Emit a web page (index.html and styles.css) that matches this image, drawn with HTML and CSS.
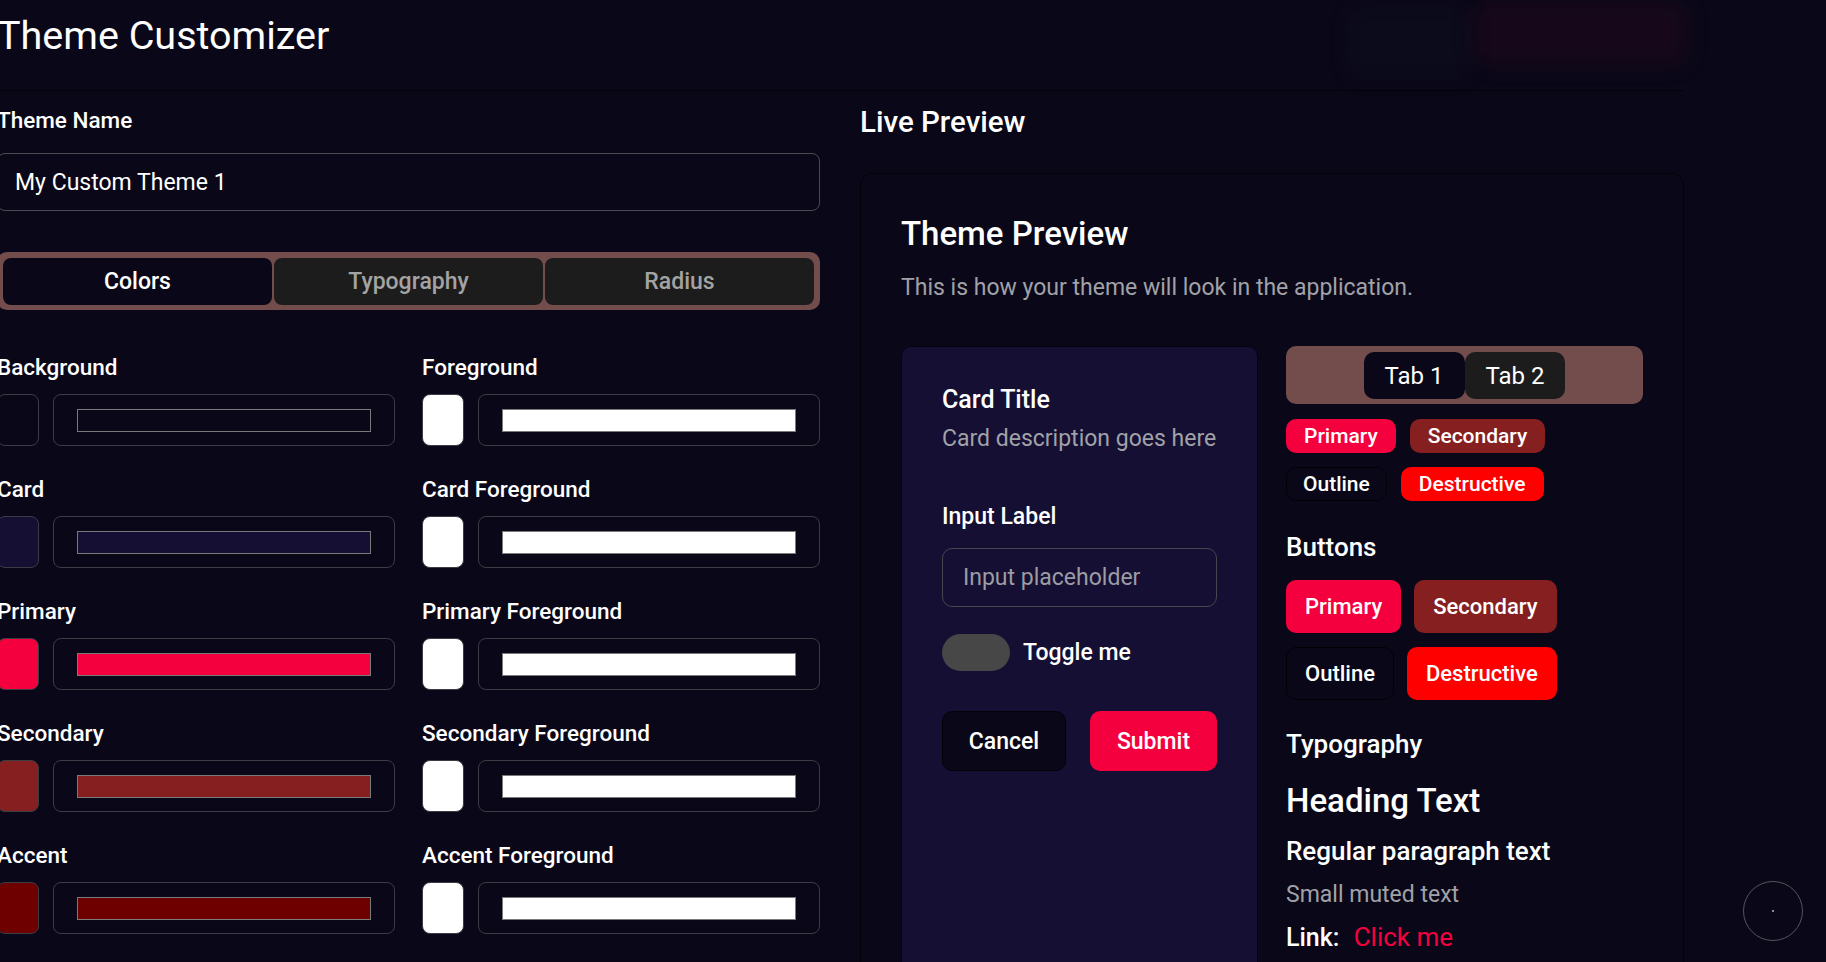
FILE: index.html
```html
<!DOCTYPE html>
<html lang="en">
<head>
<meta charset="utf-8">
<title>Theme Customizer</title>
<link rel="stylesheet" href="styles.css">
</head>
<body>
<div class="page">
  <header class="topbar">
    <h1 class="title">Theme Customizer</h1>
    <div class="top-actions">
      <div class="ghost ghost-dark"></div>
      <div class="ghost ghost-red"></div>
    </div>
  </header>

  <main class="layout">
    <section class="editor">
      <label class="field-label">Theme Name</label>
      <div class="name-input">My Custom Theme 1</div>

      <div class="seg-tabs">
        <div class="seg-tab active">Colors</div>
        <div class="seg-tab">Typography</div>
        <div class="seg-tab">Radius</div>
      </div>

      <div class="color-grid">
        <div class="color-item">
          <div class="color-label">Background</div>
          <div class="color-controls">
            <div class="swatch c-bg"></div>
            <div class="color-box"><div class="color-fill c-bg"></div></div>
          </div>
        </div>
        <div class="color-item">
          <div class="color-label">Foreground</div>
          <div class="color-controls">
            <div class="swatch c-white"></div>
            <div class="color-box"><div class="color-fill c-white"></div></div>
          </div>
        </div>

        <div class="color-item">
          <div class="color-label">Card</div>
          <div class="color-controls">
            <div class="swatch c-card"></div>
            <div class="color-box"><div class="color-fill c-card"></div></div>
          </div>
        </div>
        <div class="color-item">
          <div class="color-label">Card Foreground</div>
          <div class="color-controls">
            <div class="swatch c-white"></div>
            <div class="color-box"><div class="color-fill c-white"></div></div>
          </div>
        </div>

        <div class="color-item">
          <div class="color-label">Primary</div>
          <div class="color-controls">
            <div class="swatch c-primary"></div>
            <div class="color-box"><div class="color-fill c-primary"></div></div>
          </div>
        </div>
        <div class="color-item">
          <div class="color-label">Primary Foreground</div>
          <div class="color-controls">
            <div class="swatch c-white"></div>
            <div class="color-box"><div class="color-fill c-white"></div></div>
          </div>
        </div>

        <div class="color-item">
          <div class="color-label">Secondary</div>
          <div class="color-controls">
            <div class="swatch c-secondary"></div>
            <div class="color-box"><div class="color-fill c-secondary"></div></div>
          </div>
        </div>
        <div class="color-item">
          <div class="color-label">Secondary Foreground</div>
          <div class="color-controls">
            <div class="swatch c-white"></div>
            <div class="color-box"><div class="color-fill c-white"></div></div>
          </div>
        </div>

        <div class="color-item">
          <div class="color-label">Accent</div>
          <div class="color-controls">
            <div class="swatch c-accent"></div>
            <div class="color-box"><div class="color-fill c-accent"></div></div>
          </div>
        </div>
        <div class="color-item">
          <div class="color-label">Accent Foreground</div>
          <div class="color-controls">
            <div class="swatch c-white"></div>
            <div class="color-box"><div class="color-fill c-white"></div></div>
          </div>
        </div>
      </div>
    </section>

    <section class="preview">
      <h2 class="preview-title">Live Preview</h2>
      <div class="preview-card">
        <h3 class="pc-title">Theme Preview</h3>
        <p class="pc-desc">This is how your theme will look in the application.</p>

        <div class="pc-grid">
          <div class="demo-card">
            <div class="dc-title">Card Title</div>
            <div class="dc-desc">Card description goes here</div>
            <div class="dc-label">Input Label</div>
            <div class="dc-input">Input placeholder</div>
            <div class="toggle-row">
              <div class="toggle"></div>
              <span class="toggle-text">Toggle me</span>
            </div>
            <div class="dc-actions">
              <div class="btn btn-cancel">Cancel</div>
              <div class="btn btn-primary btn-submit">Submit</div>
            </div>
          </div>

          <div class="demo-side">
            <div class="tabs-list">
              <div class="tab tab-active">Tab 1</div>
              <div class="tab tab-idle">Tab 2</div>
            </div>

            <div class="badges">
              <span class="badge b-primary">Primary</span>
              <span class="badge b-secondary">Secondary</span>
              <span class="badge b-outline">Outline</span>
              <span class="badge b-destructive">Destructive</span>
            </div>

            <div class="sub-heading buttons-heading">Buttons</div>
            <div class="btn-grid">
              <div class="btn btn-primary">Primary</div>
              <div class="btn btn-secondary">Secondary</div>
              <div class="btn btn-outline">Outline</div>
              <div class="btn btn-destructive">Destructive</div>
            </div>

            <div class="sub-heading typo-heading">Typography</div>
            <div class="t-heading">Heading Text</div>
            <div class="t-regular">Regular paragraph text</div>
            <div class="t-muted">Small muted text</div>
            <div class="t-link">Link: <span class="link">Click me</span></div>
          </div>
        </div>
      </div>
    </section>
  </main>
</div>

<div class="fab"><span class="fab-dot"></span></div>
</body>
</html>
```

FILE: styles.css
```css
* { box-sizing: border-box; }

html, body {
  margin: 0;
  padding: 0;
  background: #0a0818;
  color: #ffffff;
  font-family: "Roboto", "Liberation Sans", sans-serif;
  overflow: hidden;
}

.page {
  margin-left: -3px;
  width: 1687px;
}

/* ---------- header ---------- */
.topbar {
  height: 91px;
  border-bottom: 1px solid #030208;
  display: flex;
  justify-content: space-between;
  align-items: flex-start;
}

.title {
  margin: 12px 0 0;
  font-size: 39.5px;
  line-height: 48px;
  font-weight: 400;
}

.top-actions {
  display: flex;
  gap: 4px;
  margin-right: -2px;
}

.ghost {
  border-radius: 12px;
  filter: blur(10px);
}

.ghost-dark {
  width: 120px;
  height: 66px;
  margin-top: 10px;
  background: rgba(24, 28, 48, 0.18);
}

.ghost-red {
  width: 212px;
  height: 62px;
  margin-top: 2px;
  background: rgba(58, 6, 34, 0.28);
}

/* ---------- layout ---------- */
.layout {
  display: grid;
  grid-template-columns: 823px 824px;
  column-gap: 40px;
  padding-top: 15px;
}

/* ---------- editor ---------- */
.field-label {
  display: block;
  font-size: 22.5px;
  line-height: 28px;
  font-weight: 500;
}

.name-input {
  margin-top: 19px;
  height: 58px;
  border: 1px solid #4a4a52;
  border-radius: 8px;
  padding: 0 17px;
  display: flex;
  align-items: center;
  font-size: 23px;
}

.seg-tabs {
  margin-top: 41px;
  height: 58px;
  padding: 6px 6px 5px;
  background: #734c4c;
  border-radius: 10px;
  display: grid;
  grid-template-columns: repeat(3, 1fr);
  gap: 2px;
}

.seg-tab {
  border-radius: 8px;
  background: #1c1c1c;
  color: #a3a3a3;
  display: flex;
  align-items: center;
  justify-content: center;
  font-size: 23px;
  font-weight: 500;
}

.seg-tab.active {
  background: #0a0818;
  color: #ffffff;
}

.color-grid {
  margin-top: 42.5px;
  display: grid;
  grid-template-columns: 1fr 1fr;
  column-gap: 27px;
  row-gap: 28.5px;
}

.color-label {
  font-size: 22.5px;
  line-height: 28px;
  font-weight: 500;
}

.color-controls {
  margin-top: 13.5px;
  height: 52px;
  display: flex;
  gap: 14px;
}

.swatch {
  width: 42px;
  flex: none;
  border: 1px solid #3c3c44;
  border-radius: 8px;
}

.color-box {
  flex: 1;
  border: 1px solid #3c3c44;
  border-radius: 8px;
  padding: 14px 23px 13px;
}

.color-fill {
  height: 100%;
  border: 1px solid #7a7a7a;
}

.c-bg { background: #0a0818; }
.c-white { background: #ffffff; }
.c-card { background: #150f33; }
.c-primary { background: #f5003f; }
.c-secondary { background: #861f1f; }
.c-accent { background: #6e0000; }

/* ---------- preview ---------- */
.preview-title {
  margin: 0;
  font-size: 29.5px;
  line-height: 32px;
  font-weight: 500;
}

.preview-card {
  margin-top: 35px;
  border: 1px solid #030208;
  border-radius: 12px;
  padding: 40px 40px 40px;
}

.pc-title {
  margin: 0;
  font-size: 33px;
  line-height: 40px;
  font-weight: 500;
}

.pc-desc {
  margin: 19px 0 0;
  font-size: 23px;
  line-height: 30px;
  color: #a1a1a8;
}

.pc-grid {
  margin-top: 43px;
  display: grid;
  grid-template-columns: 1fr 1fr;
  column-gap: 28px;
  min-height: 700px;
}

.demo-card {
  background: #150f33;
  border: 1px solid #05040e;
  border-radius: 10px;
  padding: 37px 40px 40px;
}

.dc-title {
  font-size: 25px;
  line-height: 32px;
  font-weight: 500;
}

.dc-desc {
  margin-top: 8px;
  font-size: 23px;
  line-height: 30px;
  color: #a1a1a8;
}

.dc-label {
  margin-top: 48px;
  font-size: 23px;
  line-height: 30px;
  font-weight: 500;
}

.dc-input {
  margin-top: 16px;
  height: 59px;
  border: 1px solid #46464e;
  border-radius: 10px;
  padding: 0 20px;
  display: flex;
  align-items: center;
  font-size: 23px;
  color: #9c9ca4;
}

.toggle-row {
  margin-top: 27px;
  display: flex;
  align-items: center;
  gap: 13px;
}

.toggle {
  width: 68px;
  height: 37px;
  border-radius: 999px;
  background: #474747;
}

.toggle-text {
  font-size: 23px;
  font-weight: 500;
}

.dc-actions {
  margin-top: 40px;
  display: flex;
  justify-content: space-between;
}

.btn {
  display: inline-flex;
  align-items: center;
  justify-content: center;
  height: 53px;
  padding: 0 19px;
  border-radius: 10px;
  font-size: 22px;
  font-weight: 500;
  color: #ffffff;
}

.btn-cancel {
  height: 60px;
  width: 124px;
  font-size: 23px;
  background: #0a0818;
  border: 1px solid #020206;
}

.btn-submit {
  height: 60px;
  width: 127px;
  font-size: 23px;
}

.btn-primary { background: #f5003f; }
.btn-secondary { background: #861f1f; }
.btn-destructive { background: #ff0000; }
.btn-outline {
  background: #0a0818;
  border: 1px solid #020206;
  padding: 0 18px;
}

.tabs-list {
  height: 58px;
  padding: 6px 6px 5px;
  background: #734c4c;
  border-radius: 10px;
  display: flex;
  justify-content: center;
}

.tab {
  display: flex;
  align-items: center;
  padding: 0 21px;
  border-radius: 10px;
  font-size: 24px;
  font-weight: 400;
  color: #ffffff;
}

.tab-active { background: #0a0818; }
.tab-idle { background: #1c1c1c; }

.badges {
  margin-top: 15px;
  display: flex;
  flex-wrap: wrap;
  gap: 13.6px 14px;
}

.badge {
  height: 34px;
  display: inline-flex;
  align-items: center;
  padding: 0 18px;
  border-radius: 10px;
  font-size: 21px;
  font-weight: 500;
  color: #ffffff;
}

.b-primary { background: #f5003f; }
.b-secondary { background: #861f1f; }
.b-destructive { background: #ff0000; }
.b-outline {
  border: 1px solid #020206;
  padding: 0 16px;
}

.sub-heading {
  font-size: 26px;
  line-height: 32px;
  font-weight: 500;
}

.buttons-heading { margin-top: 30px; }
.typo-heading { margin-top: 28.5px; }

.btn-grid {
  margin-top: 17px;
  display: flex;
  flex-wrap: wrap;
  gap: 14px 13px;
}

.t-heading {
  margin-top: 21px;
  font-size: 33px;
  line-height: 40px;
  font-weight: 500;
}

.t-regular {
  margin-top: 13.5px;
  font-size: 26px;
  line-height: 32px;
  font-weight: 500;
}

.t-muted {
  margin-top: 13px;
  font-size: 23px;
  line-height: 30px;
  color: #a1a1a8;
}

.t-link {
  margin-top: 11.5px;
  font-size: 25px;
  line-height: 32px;
  font-weight: 500;
}

.link {
  margin-left: 8px;
  color: #f5003f;
  font-size: 26px;
  font-weight: 400;
}

/* floating action button overlay */
.fab {
  position: fixed;
  left: 1743px;
  top: 881px;
  width: 60px;
  height: 60px;
  border: 1px solid #55555c;
  border-radius: 50%;
  display: flex;
  align-items: center;
  justify-content: center;
}

.fab-dot {
  width: 2px;
  height: 2px;
  background: #8a8a90;
}
```
